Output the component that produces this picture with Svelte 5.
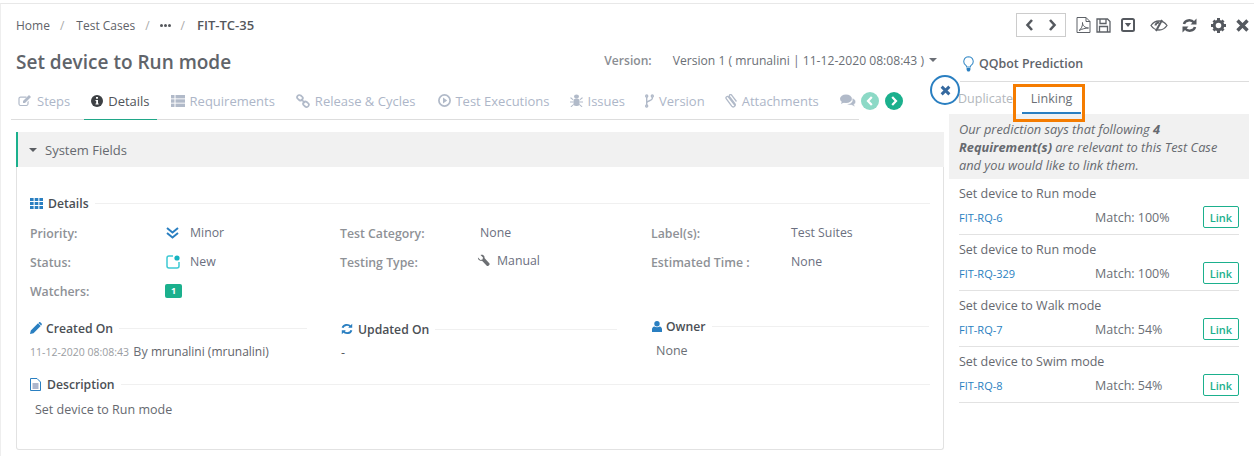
<script>
  const tabIcons = ["Steps", "Details", "Requirements", "Release & Cycles", "Test Executions", "Issues", "Version", "Attachments"];
  const suggestions = [
    { title: "Set device to Run mode", id: "FIT-RQ-6", match: "100%" },
    { title: "Set device to Run mode", id: "FIT-RQ-329", match: "100%" },
    { title: "Set device to Walk mode", id: "FIT-RQ-7", match: "54%" },
    { title: "Set device to Swim mode", id: "FIT-RQ-8", match: "54%" }
  ];
</script>

{#snippet tabIcon(name)}
  {#if name === "Steps"}
    <svg width="14" height="13" viewBox="0 0 14 13"><path d="M2.500 2.500h6v1.200h-6c-.5 0-.9.4-.9.9v5.400c0 .5.4.9.9.9h6c.5 0 .9-.4.9-.9V8l1.200-1.200v3c0 1.200-1 2.200-2.100 2.200h-6C1.300 12 .4 11 .4 9.800V4.700C.4 3.500 1.300 2.500 2.500 2.500z" fill="#b1bac9"/><path d="M5 7l6-6 2 2-6 6H5z" fill="#b1bac9"/></svg>
  {:else if name === "Details"}
    <svg width="12" height="12" viewBox="0 0 12 12"><circle cx="6" cy="6" r="6" fill="#3d4044"/><rect x="5" y="2" width="2" height="1.700" fill="#fff"/><path d="M4.500 5h2.500v3.500h.7v1H4.500v-1h.7V6h-.7z" fill="#fff"/></svg>
  {:else if name === "Requirements"}
    <svg width="14" height="12" viewBox="0 0 14 12" fill="#b1bac9"><rect width="3.500" height="3.400"/><rect x="4.500" width="9.500" height="3.400"/><rect y="4.300" width="3.500" height="3.400"/><rect x="4.500" y="4.300" width="9.500" height="3.400"/><rect y="8.600" width="3.500" height="3.400"/><rect x="4.500" y="8.600" width="9.500" height="3.400"/></svg>
  {:else if name === "Release & Cycles"}
    <svg width="14" height="14" viewBox="0 0 14 14" fill="none" stroke="#b1bac9" stroke-width="1.700"><rect x="1" y="1.500" width="6" height="4.500" rx="2.200" transform="rotate(40 4 3.700)"/><rect x="7" y="8" width="6" height="4.500" rx="2.200" transform="rotate(40 10 10.200)"/><path d="M5 5l4 4"/></svg>
  {:else if name === "Test Executions"}
    <svg width="13" height="13" viewBox="0 0 13 13"><circle cx="6.500" cy="6.500" r="5.600" fill="none" stroke="#b1bac9" stroke-width="1.700"/><path d="M5 3.500l4.200 3-4.200 3z" fill="#b1bac9"/></svg>
  {:else if name === "Issues"}
    <svg width="13" height="13" viewBox="0 0 13 13" fill="#b1bac9"><ellipse cx="6.500" cy="2.500" rx="2.500" ry="2"/><rect x="3.500" y="4.500" width="6" height="7.500" rx="2.500"/><path d="M0 4l1-.7 2.500 2.200-.5.800zM13 4l-1-.7-2.500 2.200.5.800zM0 7.500h3.500v1H0zM9.500 7.500H13v1H9.500zM.5 12.500l3-2.500.5.800-2.700 2.400zM12.500 12.500l-3-2.500-.5.800 2.700 2.400z"/></svg>
  {:else if name === "Version"}
    <svg width="9" height="14" viewBox="0 0 9 14" fill="none" stroke="#b1bac9" stroke-width="1.400"><circle cx="1.700" cy="2" r="1"/><circle cx="1.700" cy="12" r="1"/><circle cx="7.300" cy="2" r="1"/><path d="M1.700 3v8M7.300 3v1.500c0 2.500-5.600 2-5.600 4.500"/></svg>
  {:else}
    <svg width="12" height="14" viewBox="0 0 12 14" fill="none" stroke="#b1bac9" stroke-width="1.300"><path d="M10.500 12L3.500 3.200C2.500 1.500.2 3 1.200 4.700l5.500 7.500c1.500 1.800 4.500-.3 3.300-2.300L4.700 2.800C3.500 1 5.500-.2 6.800 1.300L11.500 7.500"/></svg>
  {/if}
{/snippet}

<div class="page">
  <header class="topbar">
    <nav class="crumbs">
      <span>Home</span><i>/</i>
      <span>Test Cases</span><i>/</i>
      <svg class="dots" width="11" height="3" viewBox="0 0 11 3" fill="#54575c"><circle cx="1.500" cy="1.500" r="1.500"/><circle cx="5.500" cy="1.500" r="1.500"/><circle cx="9.500" cy="1.500" r="1.500"/></svg><i>/</i>
      <strong>FIT-TC-35</strong>
    </nav>
    <div class="tools">
      <div class="pager">
        <svg width="9" height="12" viewBox="0 0 9 12"><path d="M7 1L2.500 6 7 11" fill="none" stroke="#55595f" stroke-width="2.600"/></svg>
        <svg width="9" height="12" viewBox="0 0 9 12"><path d="M2 1l4.500 5L2 11" fill="none" stroke="#55595f" stroke-width="2.600"/></svg>
      </div>
      <svg class="t-pdf" width="15" height="16" viewBox="0 0 15 16" fill="none" stroke="#5d6167"><path d="M1 .5h9l4 4v11H1z"/><path d="M10 .5v4h4M3 13.500c2-1 4-5 3.500-8 0 3 2.500 5.500 6 5.500-3 0-6.500 1-9.500 2.500z"/></svg>
      <svg class="t-save" width="15" height="15" viewBox="0 0 15 15" fill="none" stroke="#5d6167" stroke-width="1.300"><path d="M1 1h10.500L14 3.500V14H1z"/><path d="M4 1v4.500h6V1M3.500 14V8.500h8V14"/></svg>
      <svg class="t-drop" width="14" height="14" viewBox="0 0 14 14"><rect x="1" y="1" width="12" height="12" rx="1.500" fill="none" stroke="#55595f" stroke-width="2"/><path d="M3.800 5h6.400L7 9z" fill="#55595f"/></svg>
      <svg class="t-eye" width="18" height="13" viewBox="0 0 18 13" fill="none" stroke="#5d6167" stroke-width="1.300"><path d="M1 6.500C3 3.500 6 2 9 2s6 1.500 8 4.500C15 9.500 12 11 9 11S3 9.500 1 6.500z"/><path d="M12 1L6 12" stroke-width="2"/><path d="M5.500 6.500C5.500 5 7 3.500 9 3.500" stroke-width="2"/></svg>
      <svg class="t-sync" width="15" height="15" viewBox="0 0 15 15" fill="none" stroke="#55595f" stroke-width="2.500"><path d="M2 6c1-4 7-5 10-1.500M13 9c-1 4-7 5-10 1.500"/><path d="M14.500 .5v6h-6zM.5 14.500v-6h6z" fill="#55595f" stroke="none"/></svg>
      <svg class="t-gear" width="15" height="15" viewBox="0 0 15 15"><circle cx="7.500" cy="7.500" r="4.300" fill="none" stroke="#55595f" stroke-width="3"/><path d="M6 0h3v3H6zM6 12h3v3H6zM0 6h3v3H0zM12 6h3v3h-3zM1.500 3.500l2-2 2 2-2 2zM9.500 3.500l2-2 2 2-2 2zM1.500 11.500l2-2 2 2-2 2zM9.500 11.500l2-2 2 2-2 2z" fill="#55595f"/></svg>
      <svg class="t-close" width="13" height="13" viewBox="0 0 13 13"><path d="M1.500 1.500l10 10M11.500 1.500l-10 10" stroke="#55595f" stroke-width="3.400"/></svg>
    </div>
  </header>

  <div class="body">
    <main class="left">
      <div class="title-row">
        <h1>Set device to Run mode</h1>
        <div class="version">
          <span class="v-label">Version:</span>
          <span class="v-value">Version 1 ( mrunalini | 11-12-2020 08:08:43 )</span>
          <span class="caret"></span>
        </div>
      </div>

      <div class="tabs">
        {#each tabIcons as t}
          <div class="tab" class:active={t === "Details"}>
            {@render tabIcon(t)}
            <span>{t}</span>
          </div>
        {/each}
        <div class="tab comment">
          <svg width="16" height="13" viewBox="0 0 16 13" fill="#b1bac9"><ellipse cx="6" cy="4.800" rx="6" ry="4.300"/><path d="M2 7l-1 3 4-2z"/><path d="M13 4.500c2 1 3 2.500 2.500 4-.3 1-1 1.500-1.500 2l1 2.300-3.500-1.800c-2 .3-3.500 0-4.500-1 3.500 0 6.500-2 5-5.500z" stroke="#fff" stroke-width=".4"/></svg>
        </div>
        <span class="scroll off"><svg width="8" height="10" viewBox="0 0 8 10"><path d="M5.800 1L2 5l3.800 4" fill="none" stroke="#fff" stroke-width="2.200"/></svg></span>
        <span class="scroll"><svg width="8" height="10" viewBox="0 0 8 10"><path d="M2.200 1L6 5 2.200 9" fill="none" stroke="#fff" stroke-width="2.200"/></svg></span>
      </div>

      <section class="card">
        <div class="card-head"><span class="caret dark"></span>System Fields</div>
        <div class="card-body">
          <div class="sec-title first">
            <svg width="13" height="11" viewBox="0 0 13 11" fill="#2a7fc1"><rect width="3.600" height="3"/><rect x="4.700" width="3.600" height="3"/><rect x="9.400" width="3.600" height="3"/><rect y="4" width="3.600" height="3"/><rect x="4.700" y="4" width="3.600" height="3"/><rect x="9.400" y="4" width="3.600" height="3"/><rect y="8" width="3.600" height="3"/><rect x="4.700" y="8" width="3.600" height="3"/><rect x="9.400" y="8" width="3.600" height="3"/></svg>
            <span>Details</span><em></em>
          </div>

          <div class="fields">
            <div class="col">
              <div class="row"><label>Priority:</label><div class="val"><svg class="ic wide" width="13" height="12" viewBox="0 0 13 12" fill="none" stroke="#2a7fc1" stroke-width="2"><path d="M1 1l5.500 4.500L12 1M1 6l5.500 4.500L12 6"/></svg>Minor</div></div>
              <div class="row"><label>Status:</label><div class="val"><svg class="ic" width="14" height="14" viewBox="0 0 14 14"><path d="M7 1H3a2 2 0 0 0-2 2v8a2 2 0 0 0 2 2h8a2 2 0 0 0 2-2V7" fill="none" stroke="#3ec9d3" stroke-width="1.500"/><circle cx="11" cy="3" r="2.600" fill="#16b3c0"/></svg>New</div></div>
              <div class="row"><label>Watchers:</label><div class="val"><span class="badge">1</span></div></div>
            </div>
            <div class="col">
              <div class="row"><label>Test Category:</label><div class="val plain">None</div></div>
              <div class="row"><label>Testing Type:</label><div class="val tool"><svg class="ic" width="13" height="13" viewBox="0 0 13 13"><path d="M1 3.500L3.500 6l2-.5.500-2L3.500 1C5.500 0 8 1.500 7.500 4L12.500 9.500c.8 1-1.500 3.200-2.500 2.400L5 6.800C2.500 7.300.5 5.500 1 3.500z" fill="#6c6f73"/></svg>Manual</div></div>
            </div>
            <div class="col">
              <div class="row"><label>Label(s):</label><div class="val plain">Test Suites</div></div>
              <div class="row"><label>Estimated Time :</label><div class="val plain">None</div></div>
            </div>
          </div>

          <div class="meta">
            <div class="m-col created">
              <div class="sec-title">
                <svg width="12" height="12" viewBox="0 0 12 12" fill="#2a7fc1"><path d="M0 12l.8-3.500L8 1.300 10.700 4 3.500 11.200zM9 .4c.5-.5 1.100-.5 1.500 0l1.100 1.100c.4.400.4 1 0 1.400l-.4.500L8.500.9z"/></svg>
                <span>Created On</span><em></em>
              </div>
              <p class="stamp"><small>11-12-2020 08:08:43</small> By <b>mrunalini (mrunalini)</b></p>
            </div>
            <div class="m-col updated">
              <div class="sec-title">
                <svg width="12" height="12" viewBox="0 0 15 15" fill="none" stroke="#2a7fc1" stroke-width="2.400"><path d="M2 6c1-4 7-5 10-1.500M13 9c-1 4-7 5-10 1.500"/><path d="M14 1v5H9zM1 14V9h5z" fill="#2a7fc1" stroke="none"/></svg>
                <span>Updated On</span><em></em>
              </div>
              <p class="dash">-</p>
            </div>
            <div class="m-col owner">
              <div class="sec-title">
                <svg width="10" height="11" viewBox="0 0 10 11" fill="#2a7fc1"><circle cx="5" cy="2.800" r="2.700"/><path d="M0 11V8.300C0 6.800 1 5.800 2.300 5.500c1.500 1 4 1 5.400 0C9 5.800 10 6.800 10 8.300V11z"/></svg>
                <span>Owner</span><em></em>
              </div>
              <p class="none">None</p>
            </div>
          </div>

          <div class="sec-title desc">
            <svg width="11" height="13" viewBox="0 0 11 13" fill="none" stroke="#2a7fc1"><path d="M.5.500h6.500l3.500 3.500v8.500H.5z"/><path d="M2.500 6h6M2.500 8h6M2.500 10h6" stroke="#5b6f9c"/></svg>
            <span>Description</span><em></em>
          </div>
          <p class="desc-text">Set device to Run mode</p>
        </div>
      </section>
    </main>

    <aside class="panel">
      <div class="panel-head">
        <svg width="11" height="16" viewBox="0 0 11 16"><path d="M5.500.8a4.700 4.700 0 0 0-2.600 8.600c.5.400.7 1 .7 1.600h3.800c0-.6.200-1.200.7-1.600A4.700 4.700 0 0 0 5.500.8z" fill="none" stroke="#3f8fc9" stroke-width="1.100"/><path d="M3.600 12h3.800v2l-1 1.500H4.600l-1-1.500z" fill="#2a7fc1"/></svg>
        <span>QQbot Prediction</span>
      </div>
      <div class="panel-tabs">
        <span class="p-tab">Duplicate</span>
        <span class="p-tab current">Linking</span>
        <div class="highlight"></div>
      </div>
      <div class="note">
        <span>Our prediction says that following</span> <b>4</b><br />
        <b>Requirement(s)</b> <span>are relevant to this Test Case</span><br />
        <span>and you would like to link them.</span>
      </div>
      <ul class="list">
        {#each suggestions as s}
          <li>
            <div class="s-title">{s.title}</div>
            <div class="s-row">
              <a href="#top">{s.id}</a>
              <span class="match">Match: {s.match}</span>
              <button>Link</button>
            </div>
          </li>
        {/each}
      </ul>
      <div class="close-round">
        <svg width="11" height="11" viewBox="0 0 12 12"><path d="M1.800 1.800l8.400 8.400M10.200 1.800l-8.400 8.400" stroke="#35699f" stroke-width="3.200"/></svg>
      </div>
    </aside>
  </div>
</div>

<style>
  :global(body) {
    margin: 0;
    background: #fff;
    font-family: "Open Sans", "Liberation Sans", sans-serif;
    font-size: 12.5px;
    color: #6b6f76;
  }

  .page {
    margin-top: 3px;
    height: 453px;
    box-sizing: border-box;
    border-top: 1px solid #e8e8e8;
    border-left: 1px solid #eee;
    overflow: hidden;
  }

  .topbar {
    display: flex;
    justify-content: space-between;
    height: 42px;
    padding: 9px 5px 0 15px;
    box-sizing: border-box;
  }

  .crumbs {
    display: flex;
    align-items: center;
    height: 24px;
    font-size: 12px;
    color: #5f6369;
  }
  .crumbs i { color: #aaa; margin: 0 11px 0 10px; font-style: normal; }
  .crumbs span:nth-of-type(2) { margin-left: 1px; }
  .crumbs .dots { margin-left: -1px; }
  .crumbs strong { font-size: 13px; font-weight: 600; color: #54575c; margin-left: 1px; }

  .tools {
    display: flex;
    align-items: center;
    height: 24px;
  }
  .pager {
    display: flex;
    align-items: center;
    justify-content: space-between;
    width: 50px;
    height: 24px;
    box-sizing: border-box;
    padding: 0 8px;
    border: 1px solid #ccc;
    margin: -1px 10px 0 0;
  }
  .t-save { margin-left: 5px; }
  .t-drop { margin-left: 10px; }
  .t-eye { margin-left: 15px; }
  .t-sync { margin-left: 14px; }
  .t-gear { margin-left: 14px; }
  .t-close { margin-left: 10px; }

  .body { display: flex; }

  .left { width: 947px; flex: none; position: relative; }

  .title-row {
    display: flex;
    justify-content: space-between;
    align-items: center;
    height: 32px;
    padding-left: 15px;
  }
  h1 {
    margin: 0;
    font-size: 19px;
    font-weight: 600;
    color: #60646a;
  }
  .version { display: flex; align-items: center; font-size: 12.1px; margin: -4px 11px 0 0; }
  .v-label { font-weight: 600; color: #8a8d92; margin-right: 21px; }
  .v-value { font-size: 12.15px; color: #6b6f76; margin-right: 5px; }
  .caret {
    display: inline-block;
    border: 4px solid transparent;
    border-top: 4px solid #6b6f76;
    border-bottom: 0;
  }
  .caret.dark { border-top-color: #5b5e63; margin-right: 8px; }

  .tabs {
    display: flex;
    align-items: center;
    height: 37px;
    width: 848px;
    margin: 4px 0 0 10px;
    position: relative;
    border-bottom: 1px solid #ddd;
  }
  .tab {
    display: flex;
    align-items: center;
    gap: 5px;
    height: 37px;
    padding: 0 7px;
    margin-right: 7px;
    box-sizing: border-box;
    font-size: 13px;
    color: #adb6c8;
    white-space: nowrap;
  }
  .tab:nth-child(4) { margin-right: 9px; }
  .tab:nth-child(5) { margin-right: 6px; gap: 4px; }
  .tab:nth-child(6), .tab:nth-child(7) { margin-right: 6px; }
  .tab.active {
    color: #50545a;
    border-bottom: 1px solid #20a788;
    margin-bottom: -1px;
    height: 38px;
  }
  .tab.comment { margin-right: 0; padding-right: 5px; }
  .scroll {
    flex: none;
    display: flex;
    align-items: center;
    justify-content: center;
    width: 18px;
    height: 18px;
    border-radius: 50%;
    background: #1bb08d;
    margin-left: 6px;
  }
  .scroll.off { background: #8cd9c6; margin-left: 0; }

  .card {
    margin: 12px 4px 0 15px;
    height: 318px;
    box-sizing: border-box;
    border: 1px solid #e2e2e2;
    border-top: 0;
    border-radius: 0 0 3px 3px;
  }
  .card-head {
    display: flex;
    align-items: center;
    height: 35px;
    margin-left: -1px;
    margin-right: -1px;
    padding-left: 11px;
    background: #f1f1f1;
    border-left: 2px solid #1bb08d;
    font-size: 13px;
    color: #66696f;
  }
  .card-body { padding: 27px 13px 0 13px; }

  .sec-title {
    display: flex;
    align-items: center;
    gap: 4px;
    height: 18px;
    font-size: 12.2px;
    font-weight: 600;
    color: #4b4f55;
    white-space: nowrap;
  }
  .sec-title.first svg { margin-right: 1px; }
  .sec-title.desc svg { margin-right: 2px; }
  .updated .sec-title svg { margin-right: 1px; }
  .sec-title em {
    flex: 1;
    height: 1px;
    background: #f0f0f0;
    margin-left: 2px;
  }

  .fields {
    display: grid;
    grid-template-columns: 310px 311px 1fr;
    margin-top: 7px;
  }
  .row {
    display: flex;
    align-items: center;
    height: 29px;
  }
  label {
    width: 136px;
    flex: none;
    font-size: 12.3px;
    font-weight: 600;
    color: #8e9196;
  }
  .col:nth-child(n+2) label { width: 140px; }
  .val { display: flex; align-items: center; font-size: 12.3px; color: #6b6f80; margin-top: -2px; }
  .ic { margin-right: 10px; }
  .ic.wide { margin-right: 11px; }
  .tool { margin-left: -3px; margin-top: -4px; }
  .tool .ic { margin-right: 7px; }
  .badge {
    display: inline-block;
    width: 17px;
    height: 14px;
    line-height: 14px;
    text-align: center;
    border-radius: 2px;
    background: #1bb08d;
    color: #fff;
    font-size: 9px;
    font-weight: 700;
    margin-left: -1px;
  }

  .meta {
    display: grid;
    grid-template-columns: 277px 34px 276px 35px 277px;
    margin-top: 13px;
  }
  .created { grid-column: 1; }
  .updated { grid-column: 3; margin-top: 1px; }
  .owner { grid-column: 5; margin-top: -2px; }
  .meta p { margin: 5px 0 0; height: 20px; line-height: 20px; }
  .stamp b { font-size: 12px; font-weight: 400; color: #5f6369; }
  .stamp small { font-size: 10.5px; color: #9a9da2; margin-right: 1px; }
  .dash { color: #55595f; }
  .none { padding-left: 4px; }
  .meta .none { margin-top: 6px; }
  .desc { margin-top: 12px; }
  .desc-text { margin: 7px 0 0 5px; line-height: 20px; color: #66696f; }

  .panel { width: 300px; flex: none; margin-left: 1px; position: relative; }
  .panel-head {
    display: flex;
    align-items: center;
    gap: 5px;
    height: 36px;
    margin-left: 11px;
    padding-left: 3px;
    box-sizing: border-box;
    border-bottom: 1px solid #ddd;
    font-size: 12.4px;
    font-weight: 600;
    color: #60646a;
  }
  .panel-tabs {
    display: flex;
    position: relative;
    height: 32px;
    padding-left: 9px;
  }
  .p-tab { padding-top: 8px; color: #b3b7bc; }
  .p-tab.current {
    color: #6b6f76;
    margin-left: 9px;
    width: 59px;
    text-align: center;
    height: 22px;
    border-bottom: 2px solid #2a7fc1;
  }
  .highlight {
    position: absolute;
    left: 64px;
    top: 2px;
    width: 72px;
    height: 38px;
    box-sizing: border-box;
    border: 3px solid #f57c00;
  }
  .note {
    box-sizing: border-box;
    height: 65px;
    padding: 6px 10px 0;
    background: #f1f1f1;
    font-size: 12.8px;
    font-style: italic;
    line-height: 18px;
    color: #66696f;
  }
  .note b { font-weight: 700; }

  .list { list-style: none; margin: 0 10px; padding: 0; }
  li {
    height: 56px;
    box-sizing: border-box;
    border-bottom: 1px solid #e2e2e2;
  }
  .s-title { height: 30px; line-height: 30px; color: #66696f; }
  .s-row { display: flex; align-items: center; height: 20px; margin-top: -2px; }
  .s-row a {
    width: 136px;
    font-size: 11px;
    color: #2a7fc1;
    text-decoration: none;
  }
  .match { flex: 1; color: #6b6f76; padding-top: 1px; }
  button {
    width: 36px;
    height: 22px;
    padding: 0;
    background: #fff;
    border: 1px solid #1bb08d;
    border-radius: 2px;
    color: #1bb08d;
    font-family: inherit;
    font-size: 11px;
    font-weight: 600;
  }

  .close-round {
    position: absolute;
    left: -19px;
    top: 29px;
    width: 30px;
    height: 30px;
    box-sizing: border-box;
    display: flex;
    align-items: center;
    justify-content: center;
    background: #fff;
    border: 2px solid #2a7fc1;
    border-radius: 50%;
  }
</style>
